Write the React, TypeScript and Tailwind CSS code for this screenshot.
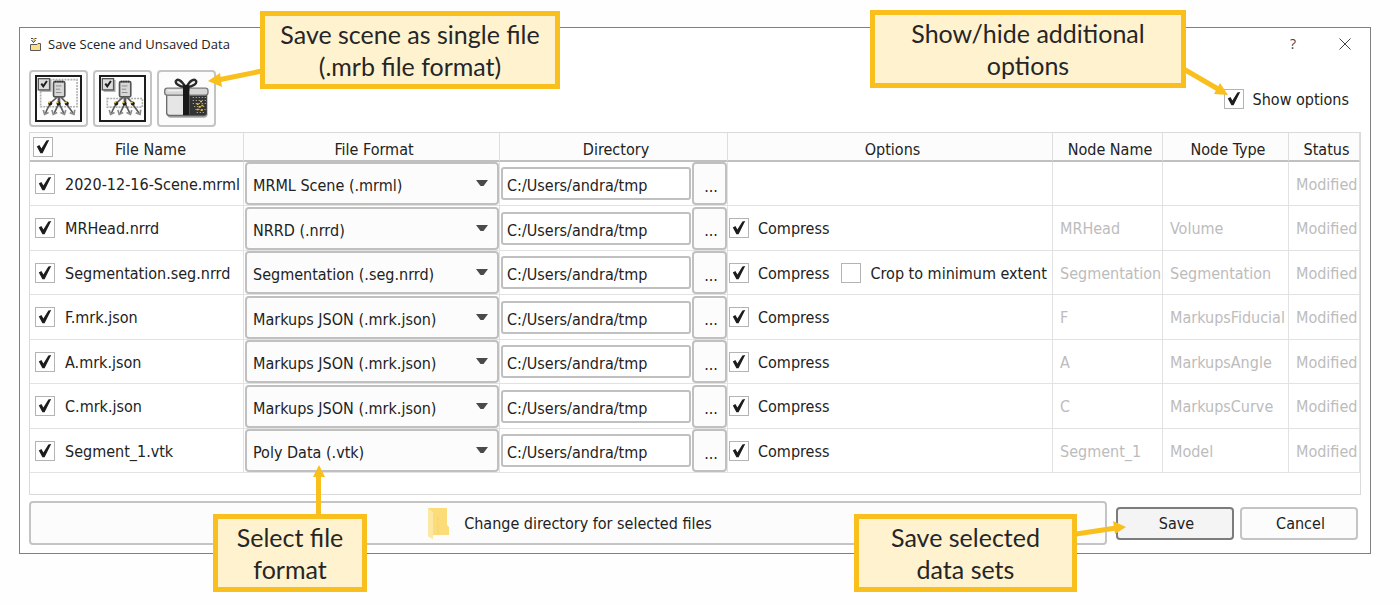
import React, { useState } from "react";

type Option = { label: string; checked: boolean };

type Row = {
  file: string;
  format: string;
  options: Option[];
  nodeName: string;
  nodeType: string;
};

const compress: Option = { label: "Compress", checked: true };

const rows: Row[] = [
  { file: "2020-12-16-Scene.mrml", format: "MRML Scene (.mrml)", options: [], nodeName: "", nodeType: "" },
  { file: "MRHead.nrrd", format: "NRRD (.nrrd)", options: [compress], nodeName: "MRHead", nodeType: "Volume" },
  {
    file: "Segmentation.seg.nrrd",
    format: "Segmentation (.seg.nrrd)",
    options: [compress, { label: "Crop to minimum extent", checked: false }],
    nodeName: "Segmentation",
    nodeType: "Segmentation",
  },
  { file: "F.mrk.json", format: "Markups JSON (.mrk.json)", options: [compress], nodeName: "F", nodeType: "MarkupsFiducial" },
  { file: "A.mrk.json", format: "Markups JSON (.mrk.json)", options: [compress], nodeName: "A", nodeType: "MarkupsAngle" },
  { file: "C.mrk.json", format: "Markups JSON (.mrk.json)", options: [compress], nodeName: "C", nodeType: "MarkupsCurve" },
  { file: "Segment_1.vtk", format: "Poly Data (.vtk)", options: [compress], nodeName: "Segment_1", nodeType: "Model" },
];

function Check({ checked, label }: { checked: boolean; label?: string }) {
  const [on, setOn] = useState(checked);
  return (
    <span className="grid size-5 shrink-0">
      <input
        type="checkbox"
        checked={on}
        onChange={() => setOn(!on)}
        aria-label={label}
        className="peer col-start-1 row-start-1 size-5 appearance-none border border-[#b4b4b4] bg-white"
      />
      <svg
        viewBox="0 0 20 20"
        className="pointer-events-none invisible col-start-1 row-start-1 size-5 peer-checked:visible"
      >
        <path d="M3.800 9.400 6.400 8 8.400 11.600 13.400 3.600 16.200 3 9.600 16.200H7.400Z" fill="#1c1c1c" />
      </svg>
    </span>
  );
}

function SceneIcon({ shift, area }: { shift: number; area: "scene" | "data" }) {
  return (
    <svg viewBox="0 0 142 142" className="size-[47px]" aria-hidden="true">
      <rect x="3" y="3" width="136" height="136" fill="#fdfdfd" stroke="#1c1c1c" strokeWidth="6" />
      {area === "scene" ? (
        <rect x="17" y="14" width="110" height="82" fill="none" stroke="#b0b0b0" strokeWidth="5" strokeDasharray="6 3" />
      ) : (
        <rect x="25" y="71" width="106" height="26" fill="none" stroke="#b0b0b0" strokeWidth="5" strokeDasharray="6 3" />
      )}
      <rect x="14" y="15" width="36" height="36" fill="#adadad" />
      <rect x="10" y="11" width="34" height="34" fill="#dcdcdc" stroke="#555" strokeWidth="4" />
      <path d="M19 26 25 34 36 18" fill="none" stroke="#1c1c1c" strokeWidth="6" />
      <g transform={`translate(${shift} 0)`}>
        <rect x="56" y="20" width="34" height="46" rx="4" fill="#d8d8d8" stroke="#555" strokeWidth="5" />
        <path d="M60 20H86" stroke="#333" strokeWidth="5" strokeDasharray="4 3" />
        <path d="M63 33H80M63 43H76M63 53H80" stroke="#8c8c8c" strokeWidth="3" />
        <path
          d="M66 67C58 76 50 80 46 87C40 99 35 104 32 116M71 67V86C68 98 62 104 58 116M74 67V86C77 98 83 104 87 116M79 67C86 76 92 79 96 87C102 99 108 104 115 116"
          fill="none"
          stroke="#5c5c5c"
          strokeWidth="5"
        />
        <path
          d="M25 106 29 119 41 113M51 106 55 119 67 113M77 113 89 119 93 106M105 114 118 119 120 105"
          fill="none"
          stroke="#8a8a8a"
          strokeWidth="5"
        />
        <circle cx="46" cy="86" r="6" fill="#1a1a1a" />
        <circle cx="71" cy="86" r="6" fill="#1a1a1a" />
        <circle cx="96" cy="86" r="6" fill="#1a1a1a" />
        <path d="M40 83H46M65 83H71M90 83H96" stroke="#f0bd32" strokeWidth="5" />
      </g>
    </svg>
  );
}

function GiftIcon() {
  return (
    <svg viewBox="0 0 135 122" className="h-[41px] w-[45px]" aria-hidden="true">
      <path d="M10 106H131V110Q129 119 120 119H20Q10 119 10 110Z" fill="#a8a8a8" />
      <path d="M8 50H128V104Q128 112 120 112H16Q8 112 8 104Z" fill="#e6e6e6" stroke="#6a6a6a" strokeWidth="4" />
      <path d="M76 50H128V104Q128 111 120 111H76Z" fill="#333" />
      <path
        d="M86 58H126M86 67H126M86 76H126M90 85H126M94 94H126M98 103H124"
        stroke="#a0a0a0"
        strokeWidth="3"
        strokeDasharray="4 5"
      />
      <path d="M98 78H104M108 70H114M104 86H110M98 94H104M112 82H118M110 96H116" stroke="#eebd38" strokeWidth="5" />
      <rect x="2" y="30" width="130" height="21" rx="8" fill="#d6d6d6" stroke="#7a7a7a" strokeWidth="4" />
      <path d="M10 37H52" stroke="#f0f0f0" strokeWidth="5" />
      <path d="M57 29H76V111H57Z" fill="#1a1a1a" />
      <path d="M64 27C52 4 40 2 36 8C32 16 45 25 64 27Z" fill="#f3f3f3" stroke="#2a2a2a" strokeWidth="7" />
      <path d="M68 27C78 4 92 2 96 8C100 16 88 25 68 27Z" fill="#f3f3f3" stroke="#2a2a2a" strokeWidth="7" />
      <path d="M57 20H76V38H57Z" fill="#1a1a1a" />
    </svg>
  );
}

function SaveSceneIcon() {
  return (
    <svg viewBox="0 0 13 15" className="h-[15px] w-[13px]" aria-hidden="true">
      <path d="M1.500 7.500H8L9 6.500H11.500V13.500H1.500Z" fill="#fbdf85" stroke="#5a5a5a" />
      <path d="M2.500 3 4.500 5.500 6.500 3" fill="none" stroke="#333" />
      <path d="M2 1.500H4M5.500 1.500H7.500" stroke="#444" />
      <path d="M4 2.500H6" stroke="#e8ae25" strokeWidth="2" />
    </svg>
  );
}

function FolderIcon() {
  return (
    <svg viewBox="0 0 22 32" className="h-8 w-[22px]" aria-hidden="true">
      <path d="M1 1H20V18L22 20V28H6V32L1 29Z" fill="#fbdc79" />
      <path d="M1 1 6 5V32L1 29Z" fill="#fce7a3" />
      <path d="M11 10V27" stroke="#f3cb53" strokeDasharray="1 1" />
    </svg>
  );
}

function Callout({ lines, className }: { lines: string[]; className: string }) {
  return (
    <div
      className={`absolute z-20 border-[5px] border-[#f9bf1c] bg-[#fff2cf] py-[2px] text-center font-['Lato',sans-serif] text-[25px] leading-8 whitespace-nowrap text-[#262626] ${className}`}
    >
      {lines.map((l) => (
        <div key={l}>{l}</div>
      ))}
    </div>
  );
}

const toolButton =
  "flex h-[57px] w-[59px] items-center justify-center rounded-[4px] border-2 border-[#c4c4c4] bg-[#fcfcfc]";
const th = "border-r border-b-2 border-r-[#dedede] border-b-[#c0c0c0] pt-[6px] pr-0 pb-0 pl-[5px] font-normal";
const td = "border-r border-b border-[#e2e2e2] p-0";
const dimTd = "border-r border-b border-[#e2e2e2] pt-[2px] pl-[7px] text-[#bcbcbc]";

export default function App() {
  return (
    <main className="relative bg-[#fefefe] pt-[27px] pr-[29px] pb-[51px] pl-[19px] font-['DejaVu_Sans_Condensed','DejaVu_Sans',sans-serif] text-[16px] leading-5 text-[#222]">
      <section className="border border-[#808080] bg-white px-[9px] pb-2">
        <header className="flex h-8 items-center font-['Open_Sans',sans-serif] text-[13px]">
          <SaveSceneIcon />
          <h1 className="ml-[6px] flex-1">Save Scene and Unsaved Data</h1>
          <button type="button" aria-label="Help" className="w-8 text-[14px] text-[#444]">
            ?
          </button>
          <button type="button" aria-label="Close" className="ml-5 flex w-8 justify-center">
            <svg viewBox="0 0 12 12" className="size-3">
              <path d="M.5 .5 11.500 11.500M11.500 .5 .5 11.500" stroke="#444" />
            </svg>
          </button>
        </header>

        <div className="flex items-center justify-between pt-[10px] pb-[5px]">
          <div className="flex gap-[5px]">
            <button type="button" aria-label="Select all scene data" className={toolButton}>
              <SceneIcon shift={0} area="scene" />
            </button>
            <button type="button" aria-label="Select modified data" className={toolButton}>
              <SceneIcon shift={6} area="data" />
            </button>
            <button type="button" aria-label="Save scene as single file" className={toolButton}>
              <GiftIcon />
            </button>
          </div>
          <label className="mr-3 flex items-center gap-[9px]">
            <Check checked />
            <span className="pt-[2px]">Show options</span>
          </label>
        </div>

        <div className="border border-[#dadada] pb-[21px]">
          <table className="w-full table-fixed border-separate border-spacing-0 whitespace-nowrap">
            <colgroup>
              <col className="w-[214px]" />
              <col className="w-[256px]" />
              <col className="w-[228px]" />
              <col />
              <col className="w-[110px]" />
              <col className="w-[126px]" />
              <col className="w-[71px]" />
            </colgroup>
            <thead>
              <tr className="h-[29px] bg-[#fcfcfc]">
                <th className="border-r border-b-2 border-r-[#dedede] border-b-[#c0c0c0] p-0 font-normal">
                  <div className="flex items-center pl-[3px]">
                    <Check checked label="Select all files" />
                    <span className="flex-1 pt-[6px] pl-[5px]">File Name</span>
                  </div>
                </th>
                <th className={th}>File Format</th>
                <th className={th}>Directory</th>
                <th className={th}>Options</th>
                <th className={th}>Node Name</th>
                <th className={th}>Node Type</th>
                <th className={th}>Status</th>
              </tr>
            </thead>
            <tbody>
              {rows.map((r) => (
                <tr key={r.file} className="h-11 even:h-[45px]">
                  <td className={td}>
                    <label className="flex items-center gap-[10px] pl-[5px]">
                      <Check checked />
                      <span className="pt-[2px]">{r.file}</span>
                    </label>
                  </td>
                  <td className={td}>
                    <div className="relative ml-px">
                      <select
                        aria-label={`File format of ${r.file}`}
                        className="block h-[43px] w-full appearance-none rounded-[4px] border-2 border-[#c0c0c0] bg-[#fcfcfc] pt-[5px] pl-[6px]"
                      >
                        <option>{r.format}</option>
                      </select>
                      <svg viewBox="0 0 12 7" className="pointer-events-none absolute top-[18px] right-[11px] h-[7px] w-3">
                        <path d="M0 0H12L7.500 6H4.500Z" fill="#4a4a4a" />
                      </svg>
                    </div>
                  </td>
                  <td className={td}>
                    <div className="flex items-center gap-px pl-px">
                      <input
                        type="text"
                        aria-label={`Directory of ${r.file}`}
                        defaultValue="C:/Users/andra/tmp"
                        className="h-[33px] w-0 flex-1 rounded-[3px] border-2 border-[#c0c0c0] bg-white pt-[4px] pl-1"
                      />
                      <button
                        type="button"
                        aria-label={`Browse directory of ${r.file}`}
                        className="h-[43px] w-[35px] rounded-[4px] border-2 border-[#c0c0c0] bg-[#fcfcfc] pt-[6px] pl-[3px]"
                      >
                        ...
                      </button>
                    </div>
                  </td>
                  <td className={td}>
                    <div className="flex gap-3 pl-px">
                      {r.options.map((o) => (
                        <label key={o.label} className="flex items-center gap-[9px]">
                          <Check checked={o.checked} />
                          <span className="pt-[2px]">{o.label}</span>
                        </label>
                      ))}
                    </div>
                  </td>
                  <td className={dimTd}>{r.nodeName}</td>
                  <td className={dimTd}>{r.nodeType}</td>
                  <td className={dimTd}>Modified</td>
                </tr>
              ))}
            </tbody>
          </table>
        </div>

        <footer className="mt-[6px] flex items-center gap-[6px] pr-[3px]">
          <button
            type="button"
            className="mr-[3px] flex h-11 flex-1 items-center justify-center gap-[15px] rounded-[4px] border-2 border-[#c4c4c4] bg-[#fcfcfc] pl-[3px]"
          >
            <FolderIcon />
            <span className="pt-[2px]">Change directory for selected files</span>
          </button>
          <button
            type="button"
            className="h-[33px] w-[118px] rounded-[4px] border-2 border-[#7c7c7c] bg-[#f4f4f4] pt-[2px] pl-[3px]"
          >
            Save
          </button>
          <button
            type="button"
            className="h-[33px] w-[118px] rounded-[4px] border-2 border-[#c4c4c4] bg-[#fcfcfc] pt-[2px] pl-[3px]"
          >
            Cancel
          </button>
        </footer>
      </section>

      <Callout lines={["Save scene as single file", "(.mrb file format)"]} className="top-[11px] left-[260px] w-[300px]" />
      <svg viewBox="0 0 54 22" className="pointer-events-none absolute top-[66px] left-[208px] z-20 h-[22px] w-[54px]">
        <path d="M54 5 10 14" stroke="#f9bf1c" strokeWidth="5" />
        <path d="M0 15 12 7 14 21Z" fill="#f9bf1c" />
      </svg>

      <Callout lines={["Show/hide additional", "options"]} className="top-[10px] right-[214px] w-[316px]" />
      <svg viewBox="0 0 48 32" className="pointer-events-none absolute top-[66px] right-[170px] z-20 h-8 w-12">
        <path d="M0 2 36 23" stroke="#f9bf1c" strokeWidth="5" />
        <path d="M46 29 32 28 38 17Z" fill="#f9bf1c" />
      </svg>

      <Callout lines={["Select file", "format"]} className="top-[514px] left-[213px] w-[154px]" />
      <svg viewBox="0 0 12 50" className="pointer-events-none absolute top-[465px] left-[313px] z-20 h-[50px] w-3">
        <path d="M5.500 50V10" stroke="#f9bf1c" strokeWidth="5" />
        <path d="M6 0 12 12H0Z" fill="#f9bf1c" />
      </svg>

      <Callout lines={["Save selected", "data sets"]} className="top-[514px] right-[323px] w-[223px]" />
      <svg viewBox="0 0 50 18" className="pointer-events-none absolute top-[520px] right-[274px] z-20 h-[18px] w-[50px]">
        <path d="M0 14 40 8" stroke="#f9bf1c" strokeWidth="5" />
        <path d="M50 7 37 1 39 14Z" fill="#f9bf1c" />
      </svg>
    </main>
  );
}
